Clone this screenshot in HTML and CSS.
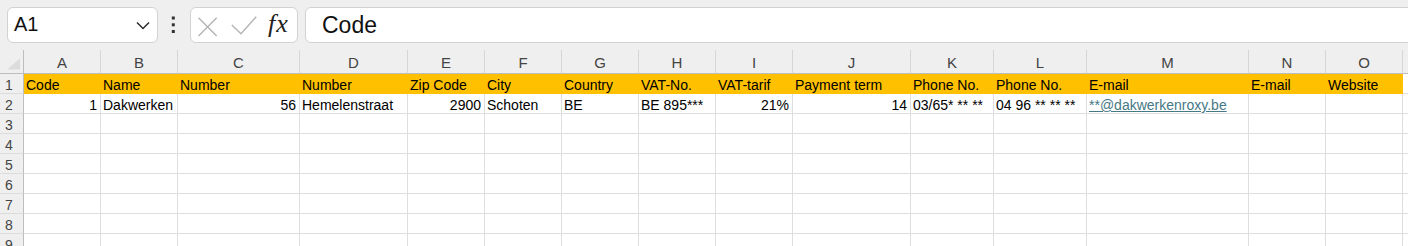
FILE: index.html
```html
<!DOCTYPE html>
<html>
<head>
<meta charset="utf-8">
<link rel="stylesheet" href="styles.css">
</head>
<body>
<div class="formula-bar">
  <div class="name-box">
    <span class="name-text">A1</span>
    <svg class="chevron" width="14" height="9" viewBox="0 0 14 9"><path d="M1 1.5 L7 7.5 L13 1.5" fill="none" stroke="#2b2b2b" stroke-width="1.5"/></svg>
  </div>
  <div class="more">
    <svg width="32" height="36" viewBox="0 0 32 36"><rect x="13.8" y="9.5" width="3" height="3" fill="#333"/><rect x="13.8" y="16.3" width="3" height="3" fill="#333"/><rect x="13.8" y="23" width="3" height="3" fill="#333"/></svg>
  </div>
  <div class="fx-box">
    <svg class="fx-icons" width="70" height="34" viewBox="0 0 70 34">
      <path d="M7.5 9.8 L25.7 28 M25.7 9.8 L7.5 28" fill="none" stroke="#b4b4b4" stroke-width="1.4"/>
      <path d="M40.8 17 L50 25.8 L65.2 8.8" fill="none" stroke="#b4b4b4" stroke-width="1.4"/>
    </svg>
    <span class="fx">fx</span>
  </div>
  <div class="formula-input"><span class="formula-text">Code</span></div>
</div>

<div class="sheet">
  <div class="corner"><svg width="24" height="24" viewBox="0 0 24 24"><path d="M20 8.5 L20 19.5 L7 19.5 Z" fill="#dcdcdc"/></svg></div>
  <div class="ch">A</div><div class="ch">B</div><div class="ch">C</div><div class="ch">D</div><div class="ch">E</div><div class="ch">F</div><div class="ch">G</div><div class="ch">H</div><div class="ch">I</div><div class="ch">J</div><div class="ch">K</div><div class="ch">L</div><div class="ch">M</div><div class="ch">N</div><div class="ch">O</div><div class="ch"></div>

  <div class="rh">1</div>
  <div class="c hd">Code</div><div class="c hd">Name</div><div class="c hd">Number</div><div class="c hd">Number</div><div class="c hd">Zip Code</div><div class="c hd">City</div><div class="c hd">Country</div><div class="c hd">VAT-No.</div><div class="c hd">VAT-tarif</div><div class="c hd">Payment term</div><div class="c hd">Phone No.</div><div class="c hd">Phone No.</div><div class="c hd">E-mail</div><div class="c hd">E-mail</div><div class="c hd">Website</div><div class="c"></div>

  <div class="rh">2</div>
  <div class="c num">1</div><div class="c">Dakwerken</div><div class="c num">56</div><div class="c">Hemelenstraat</div><div class="c num">2900</div><div class="c">Schoten</div><div class="c">BE</div><div class="c">BE 895***</div><div class="c num">21%</div><div class="c num">14</div><div class="c">03/65* ** **</div><div class="c">04 96 ** ** **</div><div class="c"><span class="link">**@dakwerkenroxy.be</span></div><div class="c"></div><div class="c"></div><div class="c"></div>

  <div class="rh">3</div>
  <div class="c"></div><div class="c"></div><div class="c"></div><div class="c"></div><div class="c"></div><div class="c"></div><div class="c"></div><div class="c"></div><div class="c"></div><div class="c"></div><div class="c"></div><div class="c"></div><div class="c"></div><div class="c"></div><div class="c"></div><div class="c"></div>

  <div class="rh">4</div>
  <div class="c"></div><div class="c"></div><div class="c"></div><div class="c"></div><div class="c"></div><div class="c"></div><div class="c"></div><div class="c"></div><div class="c"></div><div class="c"></div><div class="c"></div><div class="c"></div><div class="c"></div><div class="c"></div><div class="c"></div><div class="c"></div>

  <div class="rh">5</div>
  <div class="c"></div><div class="c"></div><div class="c"></div><div class="c"></div><div class="c"></div><div class="c"></div><div class="c"></div><div class="c"></div><div class="c"></div><div class="c"></div><div class="c"></div><div class="c"></div><div class="c"></div><div class="c"></div><div class="c"></div><div class="c"></div>

  <div class="rh">6</div>
  <div class="c"></div><div class="c"></div><div class="c"></div><div class="c"></div><div class="c"></div><div class="c"></div><div class="c"></div><div class="c"></div><div class="c"></div><div class="c"></div><div class="c"></div><div class="c"></div><div class="c"></div><div class="c"></div><div class="c"></div><div class="c"></div>

  <div class="rh">7</div>
  <div class="c"></div><div class="c"></div><div class="c"></div><div class="c"></div><div class="c"></div><div class="c"></div><div class="c"></div><div class="c"></div><div class="c"></div><div class="c"></div><div class="c"></div><div class="c"></div><div class="c"></div><div class="c"></div><div class="c"></div><div class="c"></div>

  <div class="rh">8</div>
  <div class="c"></div><div class="c"></div><div class="c"></div><div class="c"></div><div class="c"></div><div class="c"></div><div class="c"></div><div class="c"></div><div class="c"></div><div class="c"></div><div class="c"></div><div class="c"></div><div class="c"></div><div class="c"></div><div class="c"></div><div class="c"></div>

  <div class="rh">9</div>
  <div class="c"></div><div class="c"></div><div class="c"></div><div class="c"></div><div class="c"></div><div class="c"></div><div class="c"></div><div class="c"></div><div class="c"></div><div class="c"></div><div class="c"></div><div class="c"></div><div class="c"></div><div class="c"></div><div class="c"></div><div class="c"></div>
</div>
</body>
</html>
```

FILE: styles.css
```css
html, body {
  margin: 0;
  padding: 0;
  height: 246px;
  overflow: hidden;
  background: #efefef;
  font-family: "Liberation Sans", Arial, sans-serif;
}

.formula-bar {
  display: flex;
  align-items: flex-start;
  padding: 7px 0 7px 7px;
  height: 36px;
}

.name-box {
  box-sizing: border-box;
  width: 151px;
  height: 36px;
  background: #fff;
  border: 1px solid #d2d2d2;
  border-radius: 6px;
  display: flex;
  align-items: center;
  justify-content: space-between;
  padding: 0 7px 0 6px;
}

.name-text {
  font-size: 20px;
  line-height: 32px;
  align-self: flex-start;
  color: #111;
}

.chevron {
  display: block;
  margin-top: 1px;
}

.more {
  width: 32px;
  height: 36px;
}
.more svg { display: block; }

.fx-box {
  box-sizing: border-box;
  width: 108px;
  height: 36px;
  background: #fff;
  border: 1px solid #d2d2d2;
  border-radius: 6px;
  display: flex;
  align-items: flex-start;
}

.fx-icons { display: block; }

.fx {
  font-family: "Liberation Serif", "Times New Roman", serif;
  font-style: italic;
  font-size: 26px;
  line-height: 31px;
  margin-left: 7px;
  letter-spacing: 1px;
  color: #222;
}

.formula-input {
  box-sizing: border-box;
  flex: 1;
  height: 36px;
  margin-left: 7px;
  margin-right: -10px;
  background: #fff;
  border: 1px solid #d2d2d2;
  border-radius: 6px;
  padding: 1px 0 0 16px;
}

.formula-text {
  font-size: 23px;
  line-height: 33px;
  color: #111;
}

.sheet {
  display: grid;
  grid-template-columns: 24px 77px 77px 122px 108px 77px 77px 77px 77px 77px 118px 83px 93px 162px 77px 77px 1fr;
  grid-template-rows: 24px;
  grid-auto-rows: 20px;
}

.corner {
  background: #efefef;
  border-right: 1px solid #bdbdbd;
  border-bottom: 1px solid #bdbdbd;
  box-sizing: border-box;
}
.corner svg { display: block; }

.ch {
  box-sizing: border-box;
  background: #efefef;
  border-right: 1px solid #d6d6d6;
  border-bottom: 1px solid #bdbdbd;
  text-align: center;
  font-size: 15px;
  line-height: 20px;
  padding-top: 3px;
  color: #444;
}

.rh {
  box-sizing: border-box;
  background: #efefef;
  border-right: 1px solid #bdbdbd;
  border-bottom: 1px solid #dcdcdc;
  text-align: center;
  padding: 3px 5px 0 0;
  font-size: 14px;
  line-height: 16px;
  color: #444;
}

.c {
  box-sizing: border-box;
  background: #fff;
  border-right: 1px solid #dedede;
  border-bottom: 1px solid #dedede;
  padding: 3px 3px 0 2px;
  font-size: 14px;
  line-height: 16px;
  white-space: nowrap;
  overflow: hidden;
  color: #000;
}

.c.hd {
  background: #ffc000;
  border-color: #ffc000;
}

.c.num {
  text-align: right;
}

.link {
  color: #467886;
  text-decoration: underline;
}
```
